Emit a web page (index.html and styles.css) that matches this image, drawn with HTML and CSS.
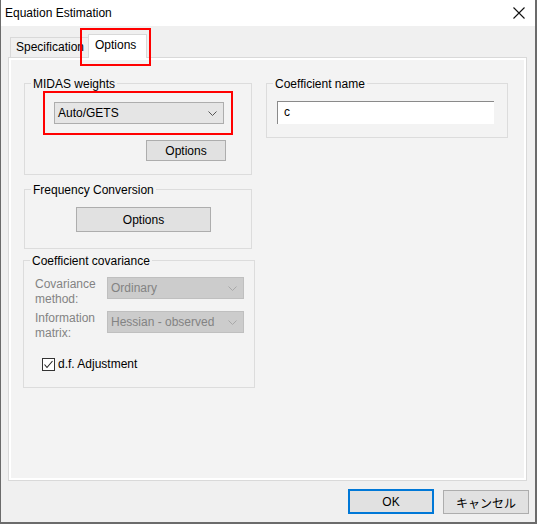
FILE: index.html
```html
<!DOCTYPE html>
<html>
<head>
<meta charset="utf-8">
<link rel="stylesheet" href="styles.css">
</head>
<body>
<div class="window">
  <div class="titlebar">
    <span class="title">Equation Estimation</span>
    <svg class="close" width="12" height="12" viewBox="0 0 12 12"><path d="M0.5 0.5 L11.5 11.5 M11.5 0.5 L0.5 11.5" stroke="#111" stroke-width="1.1" fill="none"/></svg>
  </div>
  <div class="tabstrip">
    <div class="tab">Specification</div>
    <div class="tab active">Options</div>
    <div class="mark mark-tab"></div>
  </div>
  <div class="panel">
    <div class="page">
      <div class="leftcol">
        <div class="group g-midas">
          <span class="gtitle">MIDAS weights</span>
          <div class="combo combo-midas">
            <span>Auto/GETS</span>
            <svg width="9" height="5" viewBox="0 0 9 5"><path d="M0.5 0.5 L4.5 4.5 L8.5 0.5" stroke="#555" fill="none"/></svg>
          </div>
          <div class="btn btn-midas">Options</div>
          <div class="mark mark-combo"></div>
        </div>
        <div class="group g-freq">
          <span class="gtitle">Frequency Conversion</span>
          <div class="btn btn-freq">Options</div>
        </div>
        <div class="group g-cov">
          <span class="gtitle">Coefficient covariance</span>
          <div class="row">
            <div class="lbl">Covariance<br>method:</div>
            <div class="combo disabled">
              <span>Ordinary</span>
              <svg width="9" height="5" viewBox="0 0 9 5"><path d="M0.5 0.5 L4.5 4.5 L8.5 0.5" stroke="#a8a8a8" fill="none"/></svg>
            </div>
          </div>
          <div class="row row2">
            <div class="lbl">Information<br>matrix:</div>
            <div class="combo disabled">
              <span>Hessian - observed</span>
              <svg width="9" height="5" viewBox="0 0 9 5"><path d="M0.5 0.5 L4.5 4.5 L8.5 0.5" stroke="#a8a8a8" fill="none"/></svg>
            </div>
          </div>
          <div class="check">
            <span class="box"><svg width="11" height="11" viewBox="0 0 11 11"><path d="M1.5 5.5 L4 8.5 L9.5 2" stroke="#222" stroke-width="1.1" fill="none"/></svg></span>
            <span>d.f. Adjustment</span>
          </div>
        </div>
      </div>
      <div class="rightcol">
        <div class="group g-name">
          <span class="gtitle">Coefficient name</span>
          <div class="input">c</div>
        </div>
      </div>
    </div>
  </div>
  <div class="footer">
    <div class="btn btn-ok">OK</div>
    <div class="btn btn-cancel">キャンセル</div>
  </div>
</div>
</body>
</html>
```

FILE: styles.css
```css
* { box-sizing: border-box; }
html, body { margin: 0; padding: 0; }
body {
  width: 537px;
  height: 524px;
  font-family: "Liberation Sans", "Noto Sans CJK JP", sans-serif;
  font-size: 12px;
  color: #000;
  overflow: hidden;
}
.window {
  width: 537px;
  height: 524px;
  background: #f0f0f0;
  border-left: 1px solid #6b6b6b;
  border-right: 2px solid #6b6b6b;
  border-bottom: 2px solid #6b6b6b;
  display: flex;
  flex-direction: column;
}
.titlebar {
  height: 26px;
  background: #fff;
  display: flex;
  align-items: center;
  justify-content: space-between;
  padding: 0 10px 0 4px;
  flex: none;
}
.title { line-height: 15px; margin-top: 1px; }
.close { display: block; margin-top: -1px; }
.tabstrip {
  height: 31px;
  flex: none;
  display: flex;
  align-items: flex-end;
  padding-left: 9px;
  position: relative;
}
.tab {
  height: 20px;
  border: 1px solid #d9d9d9;
  border-bottom: none;
  background: #f0f0f0;
  padding: 0 5px;
  line-height: 19px;
  width: 79px;
}
.tab.active {
  height: 24px;
  width: 59px;
  margin-left: -1px;
  margin-bottom: -1px;
  background: #fff;
  line-height: 20px;
  padding-left: 6px;
  position: relative;
  z-index: 2;
}
.mark {
  position: absolute;
  border: 2px solid #ff0000;
  z-index: 3;
}
.mark-tab { left: 79px; top: 2px; width: 71px; height: 38px; }
.panel {
  margin-left: 7px;
  width: 519px;
  height: 424px;
  flex: none;
  border: 1px solid #d9d9d9;
  background: #fff;
  padding: 2px;
}
.page {
  width: 100%;
  height: 100%;
  background: #f3f3f3;
  display: flex;
  padding: 23px 0 0 13px;
}
.leftcol { width: 228px; display: flex; flex-direction: column; }
.rightcol { margin-left: 14px; }
.group {
  position: relative;
  border: 1px solid #dcdcdc;
}
.gtitle {
  position: absolute;
  top: -7px;
  left: 6px;
  padding: 0 2px;
  line-height: 15px;
  background: #f3f3f3;
  white-space: nowrap;
}
.g-midas { width: 228px; height: 92px; padding: 18px 0 0 29px; }
.g-freq { width: 228px; height: 60px; margin-top: 14px; padding: 17px 0 0 51px; }
.g-cov { width: 232px; height: 128px; margin-top: 11px; margin-left: -1px; padding: 16px 0 0 11px; }
.g-name { width: 242px; height: 55px; padding: 17px 0 0 10px; }

.combo {
  display: flex;
  align-items: center;
  justify-content: space-between;
  background: #e5e5e5;
  border: 1px solid #adadad;
  height: 22px;
  padding: 0 6px 0 3px;
}
.combo svg { display: block; }
.combo-midas { width: 170px; }
.combo.disabled {
  width: 137px;
  height: 22px;
  background: #cccccc;
  border-color: #bfbfbf;
  color: #838383;
  padding-left: 3px;
}
.mark-combo { left: 18px; top: 7px; width: 190px; height: 44px; }
.btn {
  background: #e1e1e1;
  border: 1px solid #adadad;
  display: flex;
  align-items: center;
  justify-content: center;
}
.btn-midas { width: 80px; height: 21px; margin: 16px 0 0 92px; }
.btn-freq { width: 135px; height: 25px; }
.row { display: flex; height: 30px; }
.row2 { margin-top: 4px; }
.lbl { width: 72px; line-height: 15px; color: #838383; margin-top: 0; }
.check {
  display: flex;
  align-items: center;
  margin: 16px 0 0 7px;
  height: 14px;
}
.box {
  width: 13px;
  height: 13px;
  border: 1px solid #333;
  background: #fff;
  margin-right: 3px;
  display: flex;
  align-items: center;
  justify-content: center;
}
.box svg { display: block; }
.input {
  width: 217px;
  height: 23px;
  background: #fff;
  border-top: 1px solid #8a8a8a;
  border-left: 1px solid #8a8a8a;
  padding-left: 6px;
  line-height: 21px;
}
.footer {
  flex: none;
  display: flex;
  justify-content: flex-end;
  padding: 8px 6px 0 0;
}
.btn-ok {
  width: 86px;
  height: 25px;
  border: 2px solid #0078d7;
}
.btn-cancel {
  width: 86px;
  height: 24px;
  margin-left: 9px;
  margin-top: 1px;
}
```
